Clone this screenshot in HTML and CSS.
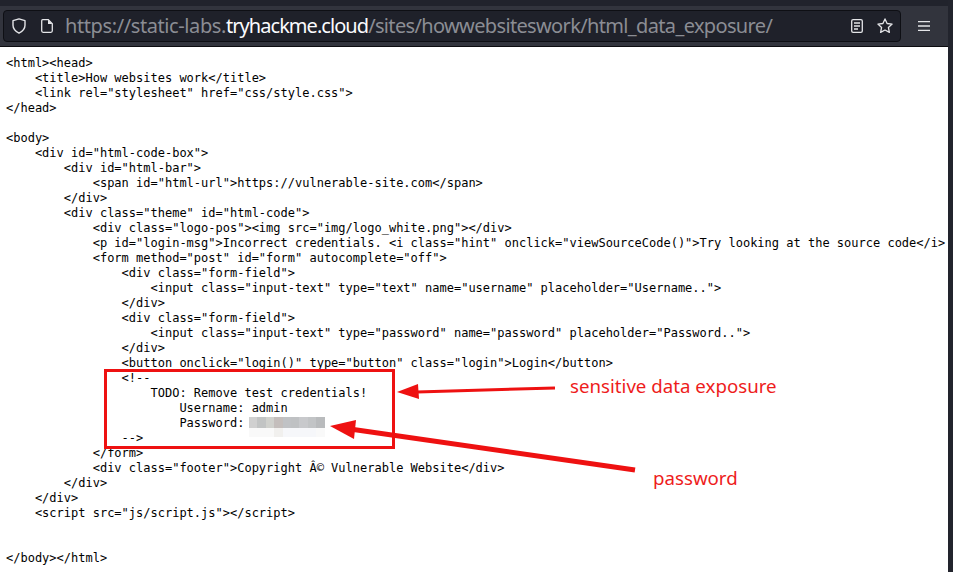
FILE: index.html
```html
<!DOCTYPE html>
<html lang="en">
<head>
<meta charset="utf-8">
<title>How websites work</title>
<link rel="stylesheet" href="styles.css">
</head>
<body>
<div class="window">
  <div class="column">
    <div class="strip"></div>
    <header class="toolbar">
      <div class="urlbar">
        <svg class="icon shield" viewBox="0 0 14 16" width="14" height="16"><path d="M7 .9 1 2.700v4.600c0 3.400 2.400 6 6 7.800 3.600-1.800 6-4.400 6-7.800V2.700z" fill="none" stroke="#e4e5e8" stroke-width="1.400" stroke-linejoin="round"/></svg>
        <svg class="icon doc" viewBox="0 0 12 14" width="12" height="14"><path d="M1.700.7h5.600l4 4v7.100c0 .8-.6 1.500-1.400 1.500H2.100c-.8 0-1.400-.7-1.400-1.500V1.700c0-.6.400-1 1-1z" fill="none" stroke="#e4e5e8" stroke-width="1.300"/><path d="M7 .7v4.300h4.300z" fill="#e4e5e8"/></svg>
        <div class="url"><span class="dim scheme">https://static-labs.</span><span class="host">tryhackme.cloud</span><span class="dim">/sites/howwebsiteswork/html_data_exposure/</span></div>
        <svg class="icon reader" viewBox="0 0 12 14" width="12" height="14"><rect x=".7" y=".7" width="10.600" height="12.600" rx="1.400" fill="none" stroke="#e4e5e8" stroke-width="1.300"/><path d="M3 4h6M3 7h6M3 10h4" stroke="#e4e5e8" stroke-width="1.300"/></svg>
        <svg class="icon star" viewBox="0 0 16 16" width="16" height="16"><path d="M8 .9 10.100 5.500l5 .6-3.700 3.400 1 4.900L8 12l-4.400 2.400 1-4.900L.9 6.100l5-.6z" fill="none" stroke="#e4e5e8" stroke-width="1.300" stroke-linejoin="round"/></svg>
      </div>
      <svg class="icon menu" viewBox="0 0 12 10" width="12" height="10"><path d="M0 .7h12M0 5h12M0 9.300h12" stroke="#e4e5e8" stroke-width="1.300"/></svg>
    </header>
    <main class="page">
<pre class="source">&lt;html&gt;&lt;head&gt;
    &lt;title&gt;How websites work&lt;/title&gt;
    &lt;link rel="stylesheet" href="css/style.css"&gt;
&lt;/head&gt;

&lt;body&gt;
    &lt;div id="html-code-box"&gt;
        &lt;div id="html-bar"&gt;
            &lt;span id="html-url"&gt;https://vulnerable-site.com&lt;/span&gt;
        &lt;/div&gt;
        &lt;div class="theme" id="html-code"&gt;
            &lt;div class="logo-pos"&gt;&lt;img src="img/logo_white.png"&gt;&lt;/div&gt;
            &lt;p id="login-msg"&gt;Incorrect credentials. &lt;i class="hint" onclick="viewSourceCode()"&gt;Try looking at the source code&lt;/i&gt;
            &lt;form method="post" id="form" autocomplete="off"&gt;
                &lt;div class="form-field"&gt;
                    &lt;input class="input-text" type="text" name="username" placeholder="Username.."&gt;
                &lt;/div&gt;
                &lt;div class="form-field"&gt;
                    &lt;input class="input-text" type="password" name="password" placeholder="Password.."&gt;
                &lt;/div&gt;
                &lt;button onclick="login()" type="button" class="login"&gt;Login&lt;/button&gt;
                &lt;!--
                    TODO: Remove test credentials!
                        Username: admin
                        Password: 
                --&gt;
            &lt;/form&gt;
            &lt;div class="footer"&gt;Copyright Â© Vulnerable Website&lt;/div&gt;
        &lt;/div&gt;
    &lt;/div&gt;
    &lt;script src="js/script.js"&gt;&lt;/script&gt;


&lt;/body&gt;&lt;/html&gt;</pre>
      <div class="redacted"></div>
      <div class="box"></div>
      <svg class="arrows" viewBox="0 0 948 525" width="948" height="525">
        <path d="M555 341 417 345" stroke="#ee1111" stroke-width="3" fill="none"/>
        <path d="M397 345 418 337 419 352z" fill="#ee1111"/>
        <path d="M635 423 350 382" stroke="#ee1111" stroke-width="5" fill="none"/>
        <path d="M330 379 356 373 354 392z" fill="#ee1111"/>
      </svg>
      <span class="note note-exposure">sensitive data exposure</span>
      <span class="note note-password">password</span>
    </main>
  </div>
  <div class="scrollbar"></div>
</div>
</body>
</html>
```
FILE: styles.css
```css
* { box-sizing: border-box; }
html, body { margin: 0; height: 100%; overflow: hidden; }
.window { display: flex; height: 572px; background: #23252e; }
.column { flex: 1; min-width: 0; display: flex; flex-direction: column; }
.strip { height: 6px; background: #21232c; }
.toolbar {
  height: 41px;
  display: flex;
  align-items: center;
  padding: 4px 18px 5px 3px;
  gap: 17px;
  background: #32343d;
  border-bottom: 1px solid #0c0c10;
}
.urlbar {
  flex: 1;
  height: 32px;
  display: flex;
  align-items: center;
  padding: 0 7px 0 8px;
  background: #1f212a;
  border: 1px solid #0e0f14;
  border-radius: 4px;
}
.icon { flex: none; display: block; }
.doc { margin-left: 15px; }
.url {
  flex: 1;
  margin-left: 12px;
  font: 20px/30px "Noto Sans", sans-serif;
  letter-spacing: -0.65px;
  color: #fbfbfe;
  white-space: nowrap;
  overflow: hidden;
}
.dim { color: #8b8d94; }
.scheme { letter-spacing: -0.4px; }
.host { letter-spacing: -0.95px; }
.reader { margin-right: 14px; }
.page { position: relative; flex: 1; background: #fff; overflow: hidden; }
.scrollbar { width: 5px; background: #22242d; }
.source {
  margin: 9px 6px 0;
  font: 12px/15px "DejaVu Sans Mono", monospace;
  color: #000;
  white-space: pre;
}
.redacted {
  position: absolute;
  left: 249px;
  top: 370px;
  width: 76px;
  height: 20px;
  background:
    linear-gradient(90deg, #d0d0d0 0 8px, #c2c4c4 8px 17px, #d0d1cd 17px 25px, #c4bebc 25px 34px, #c0c2c5 34px 42px, #bfc1c3 42px 50px, #c8c9cc 50px 59px, #c2c4c6 59px 67px, #b9bbbd 67px 76px) top / 100% 11px no-repeat,
    linear-gradient(90deg, #f9f9f9 0 25px, #f1f0ee 25px 34px, #f6f7fa 34px 67px, #f9f9f9 67px 76px) bottom / 100% 9px no-repeat;
}
.box {
  position: absolute;
  left: 104px;
  top: 322px;
  width: 291px;
  height: 80px;
  border: 3px solid #ee1111;
}
.arrows { position: absolute; left: 0; top: 0; }
.note {
  position: absolute;
  font: 18.7px/24px "Noto Sans", sans-serif;
  color: #ee1c1c;
  white-space: nowrap;
}
.note-exposure { left: 570px; top: 327px; }
.note-password { left: 653px; top: 419px; }
```
